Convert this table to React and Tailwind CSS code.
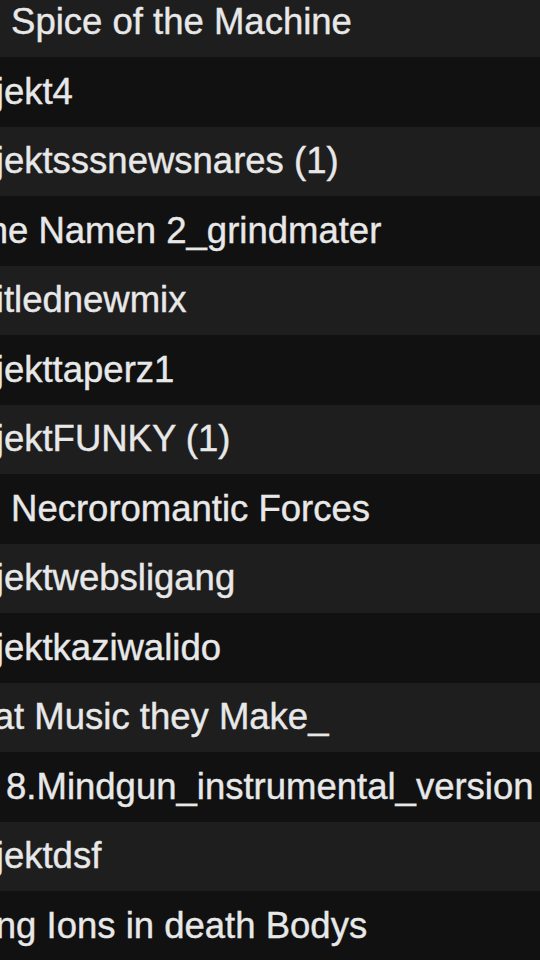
import React from "react";

const rows = [
  { t: "The Spice of the Machine", o: "ml-[-62px]" },
  { t: "Projekt4", o: "ml-[-61px]" },
  { t: "Projektsssnewsnares (1)", o: "ml-[-61px]" },
  { t: "Ohne Namen 2_grindmater", o: "ml-[-61px]" },
  { t: "Untitlednewmix", o: "ml-[-61px]" },
  { t: "Projekttaperz1", o: "ml-[-61px]" },
  { t: "ProjektFUNKY (1)", o: "ml-[-61px]" },
  { t: "The Necroromantic Forces", o: "ml-[-62px]" },
  { t: "Projektwebsligang", o: "ml-[-61px]" },
  { t: "Projektkaziwalido", o: "ml-[-61px]" },
  { t: "What Music they Make_", o: "ml-[-61px]" },
  { t: "The 8.Mindgun_instrumental_version", o: "ml-[-67px]" },
  { t: "Projektdsf", o: "ml-[-61px]" },
  { t: "Killing Ions in death Bodys", o: "ml-[-61px]" },
];

export default function App() {
  return (
    <div
      className="w-[540px] h-[960px] overflow-hidden bg-[#111111]"
      style={{ fontFamily: '"Liberation Sans", Arial, Helvetica, sans-serif' }}
    >
      <div className="flex flex-col mt-[-12.5px]">
        {rows.map((r, i) => (
          <div
            key={i}
            className={`h-[69.5px] shrink-0 flex items-center overflow-hidden ${
              i % 2 === 0 ? "bg-[#1e1e1e]" : "bg-[#111111]"
            }`}
          >
            <span
              className={`${r.o} whitespace-nowrap text-[36.5px] leading-[40px] text-[#e8e8e8] [-webkit-text-stroke:0.4px_#e8e8e8]`}
            >
              {r.t}
            </span>
          </div>
        ))}
      </div>
    </div>
  );
}
